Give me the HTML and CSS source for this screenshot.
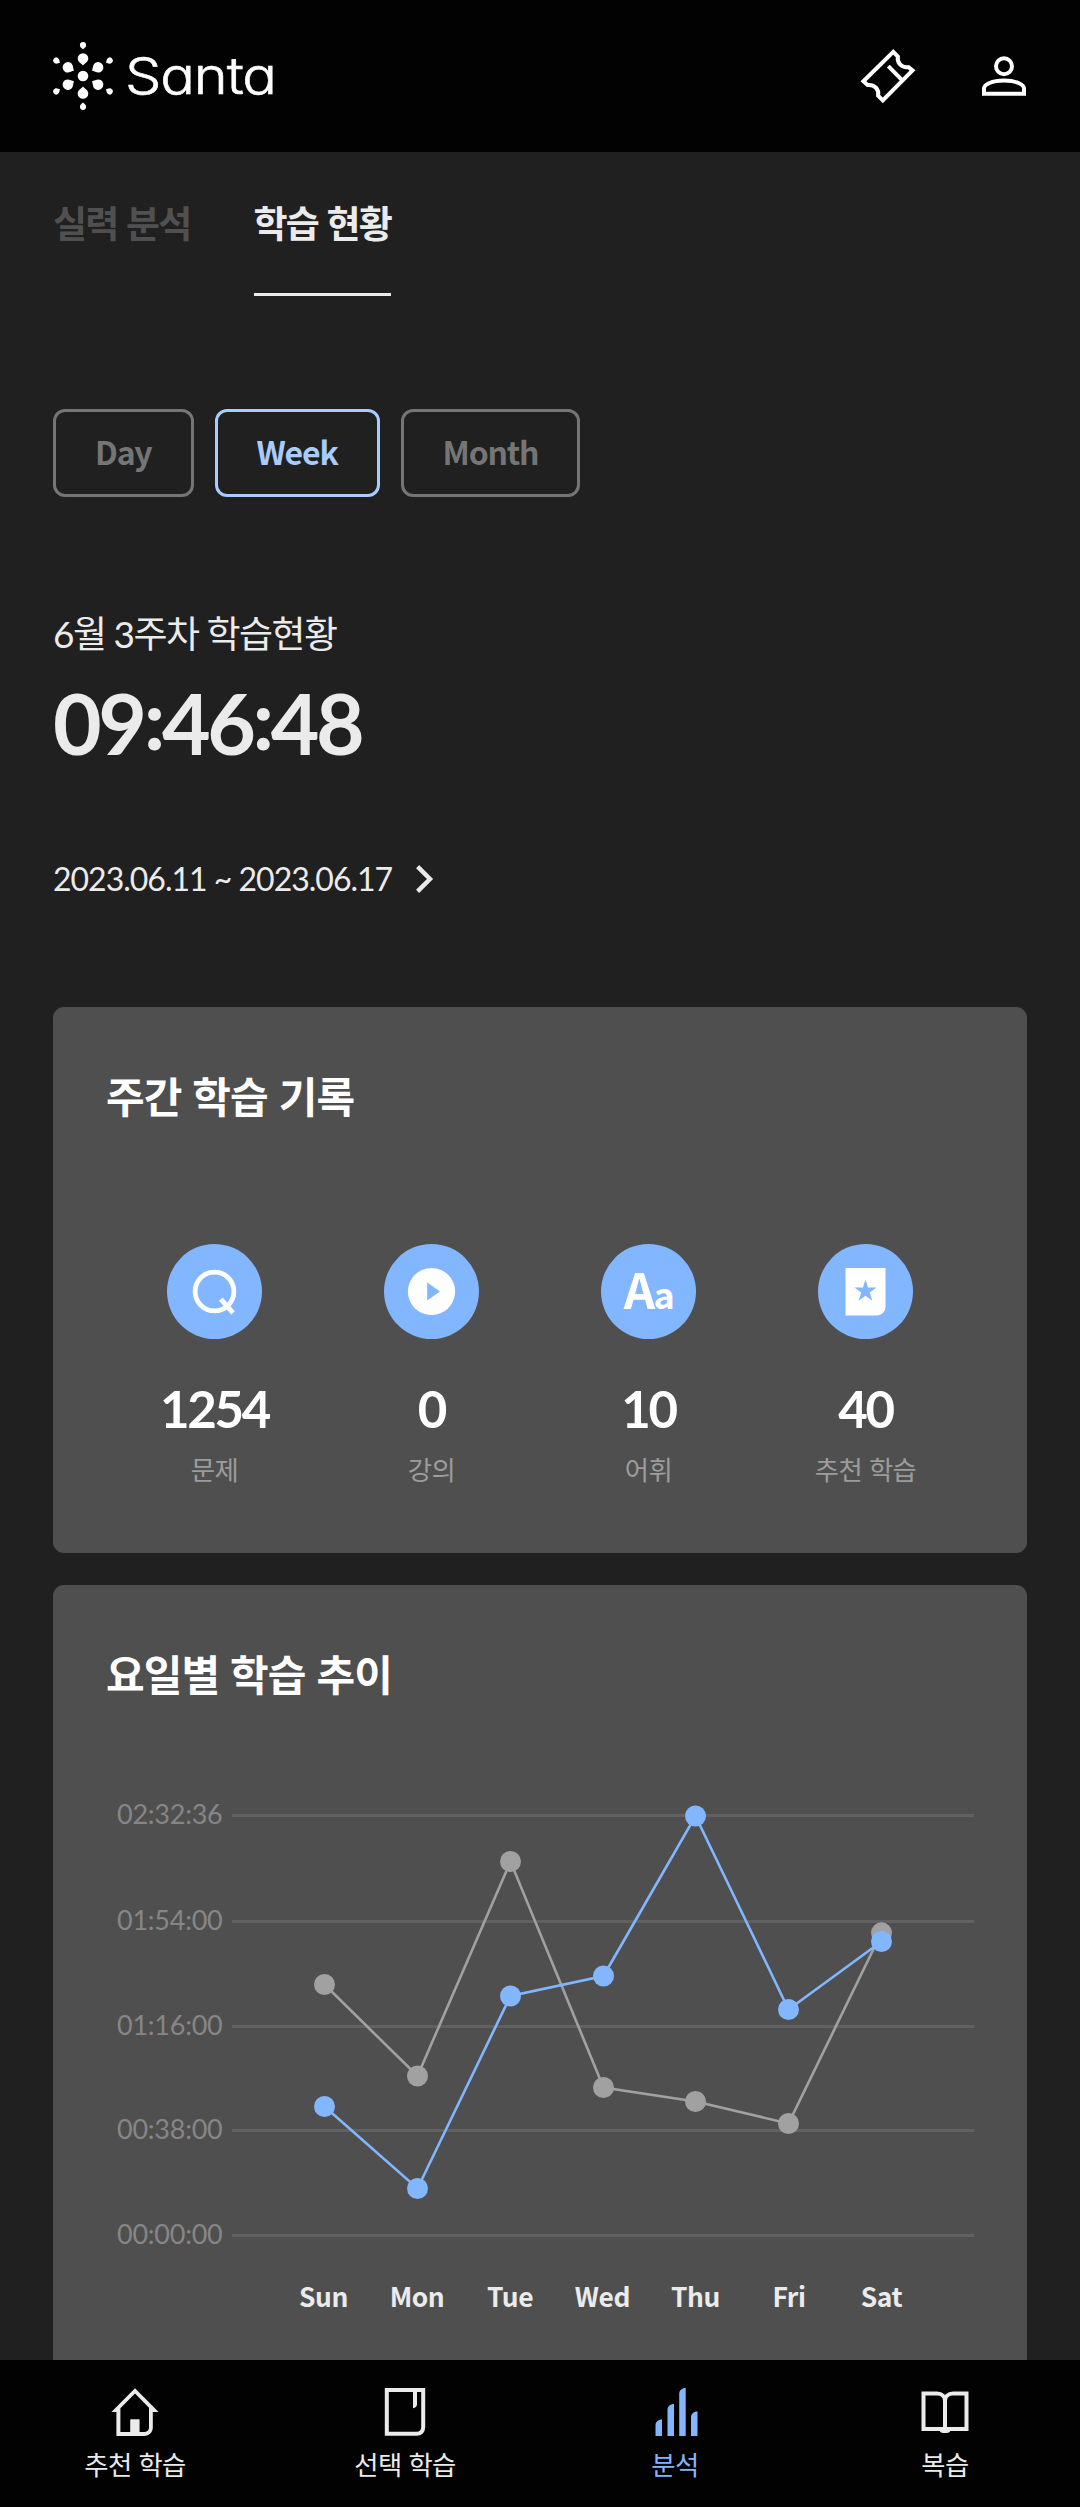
FILE: index.html
```html
<!DOCTYPE html>
<html lang="ko">
<head>
  <meta charset="UTF-8">
  <meta name="viewport" content="width=device-width, initial-scale=1.0">
  <title>Santa</title>
  <link rel="stylesheet" href="styles.css">
</head>
<body>
  <header class="header">
    <div class="logo">
      <svg class="logo-mark" width="60" height="68" viewBox="-30 -34 60 68" fill="#fff">
        <defs>
          <g id="ray">
            <path d="M0-10.4C-1.6-12.6-5.3-14-5.3-17.4a5.3 5.3 0 0 1 10.6 0C5.3-14 1.6-12.6 0-10.4z"/>
            <path d="M0-26.6C-.9-27.8-3.1-28.6-3.1-30.8a3.1 3.1 0 0 1 6.2 0C3.1-28.6.9-27.8 0-26.6z"/>
          </g>
        </defs>
        <circle r="5.3"/>
        <use href="#ray"/>
        <use href="#ray" transform="rotate(60)"/>
        <use href="#ray" transform="rotate(120)"/>
        <use href="#ray" transform="rotate(180)"/>
        <use href="#ray" transform="rotate(240)"/>
        <use href="#ray" transform="rotate(300)"/>
      </svg>
      <span class="logo-text">Santa</span>
    </div>
    <div class="header-actions">
      <svg width="56" height="56" viewBox="0 0 56 56" fill="none" stroke="#fff" stroke-width="4">
        <path d="M33.3 3.8l4.6 4.8c-1.2 6 3.4 11.4 10.6 10.6l4 3.2-29.7 30-4.7-4.8c1.2-6-3.4-11.4-10.6-10.6L3.4 33.2z"/>
        <path d="M28.3 18.2l13.8 14"/>
      </svg>
      <svg width="44" height="41" viewBox="0 0 44 41" fill="none" stroke="#fff" stroke-width="4">
        <ellipse cx="22" cy="10.3" rx="8" ry="8"/>
        <path d="M2 37.8v-5.3c0-4 8-8 20-8s20 4 20 8v5.3z"/>
      </svg>
    </div>
  </header>

  <main class="content">
    <div class="tabs">
      <a class="tab">실력 분석</a>
      <a class="tab active">학습 현황</a>
    </div>

    <div class="periods">
      <button class="period-btn">Day</button>
      <button class="period-btn active">Week</button>
      <button class="period-btn">Month</button>
    </div>

    <section class="summary">
      <div class="summary-title">6월 3주차 학습현황</div>
      <div class="summary-time">09<span class="colon">:</span>46<span class="colon">:</span>48</div>
      <div class="summary-range">
        <span>2023.06.11 ~ 2023.06.17</span>
        <svg width="18" height="28" viewBox="0 0 18 28" fill="none" stroke="#ebebeb" stroke-width="4.4">
          <path d="M1.600 1.600L14 14 1.600 26.400"/>
        </svg>
      </div>
    </section>

    <section class="card">
      <h2 class="card-title">주간 학습 기록</h2>
      <div class="stats">
        <div class="stat">
          <div class="stat-icon">
            <svg width="95" height="95" viewBox="0 0 95 95" fill="none" stroke="#fff" stroke-width="4.8">
              <circle cx="47.5" cy="47.5" r="19.4"/>
              <path d="M53.8 55.2l12.2 13.6"/>
            </svg>
          </div>
          <div class="stat-value">1254</div>
          <div class="stat-label">문제</div>
        </div>
        <div class="stat">
          <div class="stat-icon">
            <svg width="95" height="95" viewBox="0 0 95 95">
              <circle cx="47.5" cy="47.5" r="23.6" fill="#fff"/>
              <path d="M43.2 38.6v17.8l12.8-8.9z" fill="#82b6ff"/>
            </svg>
          </div>
          <div class="stat-value">0</div>
          <div class="stat-label">강의</div>
        </div>
        <div class="stat">
          <div class="stat-icon stat-icon-text">A<small>a</small></div>
          <div class="stat-value">10</div>
          <div class="stat-label">어휘</div>
        </div>
        <div class="stat">
          <div class="stat-icon">
            <svg width="95" height="95" viewBox="0 0 95 95">
              <path d="M27.5 24h40v39a8.5 8.5 0 0 1-8.5 8.5H27.5z" fill="#fff"/>
              <path d="M47.5 35.8l2.6 7.7h8.5l-6.8 5 2.5 8.2-6.8-4.9-6.8 4.9 2.5-8.2-6.8-5h8.5z" fill="#82b6ff"/>
            </svg>
          </div>
          <div class="stat-value">40</div>
          <div class="stat-label">추천 학습</div>
        </div>
      </div>
    </section>

    <section class="card">
      <h2 class="card-title">요일별 학습 추이</h2>
      <svg class="chart" width="868" height="580" viewBox="0 0 868 580">
        <g class="chart-grid">
          <path d="M126 35.5h742M126 141.5h742M126 246.5h742M126 350.5h742M126 455.5h742"/>
        </g>
        <g class="chart-times">
          <text x="11" y="44">02:32:36</text>
          <text x="11" y="150">01:54:00</text>
          <text x="11" y="254.5">01:16:00</text>
          <text x="11" y="358.5">00:38:00</text>
          <text x="11" y="463.5">00:00:00</text>
        </g>
        <!-- last week -->
        <g class="series series-prev">
          <polyline points="218.5,204.5 311.5,296 404.5,81.5 497.5,307.5 589.5,321.5 682.5,343.5 775.5,152.8"/>
          <circle cx="218.5" cy="204.5" r="10.5"/>
          <circle cx="311.5" cy="296" r="10.5"/>
          <circle cx="404.5" cy="81.5" r="10.5"/>
          <circle cx="497.5" cy="307.5" r="10.5"/>
          <circle cx="589.5" cy="321.5" r="10.5"/>
          <circle cx="682.5" cy="343.5" r="10.5"/>
          <circle cx="775.5" cy="152.8" r="10.5"/>
        </g>
        <!-- this week -->
        <g class="series series-current">
          <polyline points="218.5,326.5 311.5,408.5 404.5,216 497.5,196 589.5,36 682.5,229.5 775.5,161.5"/>
          <circle cx="218.5" cy="326.5" r="10.5"/>
          <circle cx="311.5" cy="408.5" r="10.5"/>
          <circle cx="404.5" cy="216" r="10.5"/>
          <circle cx="497.5" cy="196" r="10.5"/>
          <circle cx="589.5" cy="36" r="10.5"/>
          <circle cx="682.5" cy="229.5" r="10.5"/>
          <circle cx="775.5" cy="161.5" r="10.5"/>
        </g>
        <g class="chart-days">
          <text x="217.5" y="526.5">Sun</text>
          <text x="311" y="526.5">Mon</text>
          <text x="404" y="526.5">Tue</text>
          <text x="496.5" y="526.5">Wed</text>
          <text x="589.5" y="526.5">Thu</text>
          <text x="683" y="526.5">Fri</text>
          <text x="775.5" y="526.5">Sat</text>
        </g>
      </svg>
    </section>
  </main>

  <nav class="bottom-nav">
    <a class="nav-item">
      <svg width="48" height="48" viewBox="0 0 48 48" fill="currentColor">
        <path d="M24 .2L.4 24h5v24h27.8c5 0 8.6-3.6 8.6-8.400V24h5.800zM24 5.600l14 14.200v19.800c0 2.600-1.700 4.400-4.400 4.400H28.300V31.600h-8.800V44H9.400V20.200z" fill-rule="evenodd"/>
        <path d="M19.400 31.500h9V46h-9z"/>
      </svg>
      <span>추천 학습</span>
    </a>
    <a class="nav-item">
      <svg width="48" height="48" viewBox="0 0 48 48" fill="none" stroke="currentColor" stroke-width="4">
        <path d="M5.800 2h36.400v37c0 4.400-2.600 6.800-6.600 6.800H5.800z"/>
        <path d="M32 2h4v14.200c0 2.200-1.600 3.800-4 4z" fill="currentColor" stroke="none"/>
      </svg>
      <span>선택 학습</span>
    </a>
    <a class="nav-item active">
      <svg width="48" height="48" viewBox="0 0 48 48" fill="currentColor">
        <path d="M4.500 48V37.500c0-3.500 2.500-6 6.500-6V48zM16.500 48V22c0-3.500 2.500-6 6.500-6v32zM28.200 48V6c0-3.500 2.500-6 6.500-6v48zM40 48V29.500c0-3.500 2.500-6 6.500-6V48z"/>
      </svg>
      <span>분석</span>
    </a>
    <a class="nav-item">
      <svg width="48" height="48" viewBox="0 0 48 48" fill="none" stroke="currentColor" stroke-width="4">
        <path d="M24 42V13c0-4-3-7.500-8-7.500H2.500V41H19M24 42V13c0-4 3-7.500 8-7.500h13.500V41H29"/>
        <path d="M19 39h10v4.500c-1 2-9 2-10 0z" fill="currentColor" stroke="none"/>
      </svg>
      <span>복습</span>
    </a>
  </nav>
</body>
</html>
```
FILE: styles.css
```css
* {
  margin: 0;
  padding: 0;
  box-sizing: border-box;
}

body {
  display: flex;
  flex-direction: column;
  width: 1080px;
  height: 2507px;
  overflow: hidden;
  font-family: 'Noto Sans CJK KR', sans-serif;
  background: #202020;
  color: #ebebeb;
}

svg {
  display: block;
  flex-shrink: 0;
}

.header {
  display: flex;
  align-items: center;
  justify-content: space-between;
  flex-shrink: 0;
  height: 152px;
  padding: 0 54px 0 53px;
  background: #020202;
}

.logo {
  display: flex;
  align-items: center;
  gap: 12px;
}

.logo-text {
  font-family: Inter, sans-serif;
  font-size: 51px;
  font-weight: 300;
  line-height: 68px;
  letter-spacing: -1px;
  font-feature-settings: 'cv11';
  color: #fff;
  -webkit-text-stroke: 0.6px #fff;
  transform: scaleX(1.13);
  transform-origin: left;
}

.header-actions {
  display: flex;
  align-items: center;
  gap: 66px;
}

.content {
  flex: 1;
  min-height: 0;
  padding: 0 53px;
  overflow: hidden;
}

.tabs {
  display: flex;
  gap: 63px;
  padding-top: 43px;
}

.tab {
  padding-bottom: 44px;
  border-bottom: 3px solid transparent;
  font-size: 37px;
  font-weight: 700;
  line-height: 54px;
  letter-spacing: -1.8px;
  color: #505050;
}

.tab.active {
  border-color: #ebebeb;
  color: #ebebeb;
}

.periods {
  display: flex;
  gap: 21px;
  margin-top: 113px;
}

.period-btn {
  height: 88px;
  padding: 0 39px 5px;
  background: none;
  border: 3px solid #757575;
  border-radius: 12px;
  font-family: inherit;
  font-size: 32px;
  font-weight: 700;
  letter-spacing: -1.2px;
  color: #757575;
}

.period-btn.active {
  border-color: #a8ccff;
  color: #a8ccff;
}

.summary {
  font-family: Lato, 'Noto Sans CJK KR', sans-serif;
}

.summary-title {
  margin-top: 110px;
  font-size: 37px;
  line-height: 54px;
  letter-spacing: -1.5px;
}

.summary-time {
  margin-top: 12px;
  font-size: 84px;
  font-weight: 700;
  line-height: 100px;
  letter-spacing: -3.4px;
}

.summary-time .colon {
  line-height: 1;
  vertical-align: 5px;
}

.summary-range {
  display: flex;
  align-items: center;
  gap: 24px;
  margin-top: 86px;
  font-size: 32px;
  line-height: 40px;
  letter-spacing: -1px;
}

.card {
  margin-top: 32px;
  padding: 57px 53px 65px;
  border-radius: 11px;
  background: #4f4f4f;
}

.summary + .card {
  margin-top: 108px;
}

.card-title {
  font-size: 42px;
  font-weight: 700;
  line-height: 62px;
  letter-spacing: -0.9px;
  color: #fff;
}

.stats {
  display: grid;
  grid-template-columns: repeat(4, 1fr);
  margin-top: 118px;
}

.stat {
  display: flex;
  flex-direction: column;
  align-items: center;
}

.stat-icon {
  width: 95px;
  height: 95px;
  border-radius: 50%;
  background: #82b6ff;
}

.stat-icon-text {
  display: flex;
  align-items: baseline;
  justify-content: center;
  font-size: 49px;
  font-weight: 700;
  line-height: 87px;
  letter-spacing: -1.6px;
  color: #fff;
}

.stat-icon-text small {
  font-size: 36px;
}

.stat-value {
  margin-top: 40px;
  font-family: Lato, sans-serif;
  font-size: 51px;
  font-weight: 700;
  line-height: 60px;
  letter-spacing: -2.3px;
  color: #fff;
}

.stat-label {
  margin-top: 11px;
  font-size: 26.4px;
  line-height: 38px;
  letter-spacing: -0.6px;
  color: #9c9c9c;
}

.chart {
  margin-top: 76px;
}

.chart-grid {
  stroke: #616161;
  stroke-width: 3;
}

.chart-times {
  font-family: Lato, sans-serif;
  font-size: 27px;
  letter-spacing: -0.25px;
  fill: #868686;
}

.chart-days {
  font-size: 26.4px;
  font-weight: 700;
  letter-spacing: -0.4px;
  text-anchor: middle;
  fill: #ebebeb;
}

.series polyline {
  fill: none;
  stroke-width: 2.6;
}

.series-prev {
  fill: #a1a1a1;
  stroke: #a1a1a1;
}

.series-current {
  fill: #82b6ff;
  stroke: #82b6ff;
}

.series circle {
  stroke: none;
}

.bottom-nav {
  display: grid;
  grid-template-columns: repeat(4, 1fr);
  flex-shrink: 0;
  height: 147px;
  background: #020202;
}

.nav-item {
  display: flex;
  flex-direction: column;
  align-items: center;
  gap: 9px;
  padding-top: 28px;
  font-size: 26.4px;
  line-height: 38px;
  letter-spacing: -0.6px;
}

.nav-item.active {
  color: #82b6ff;
}
```
